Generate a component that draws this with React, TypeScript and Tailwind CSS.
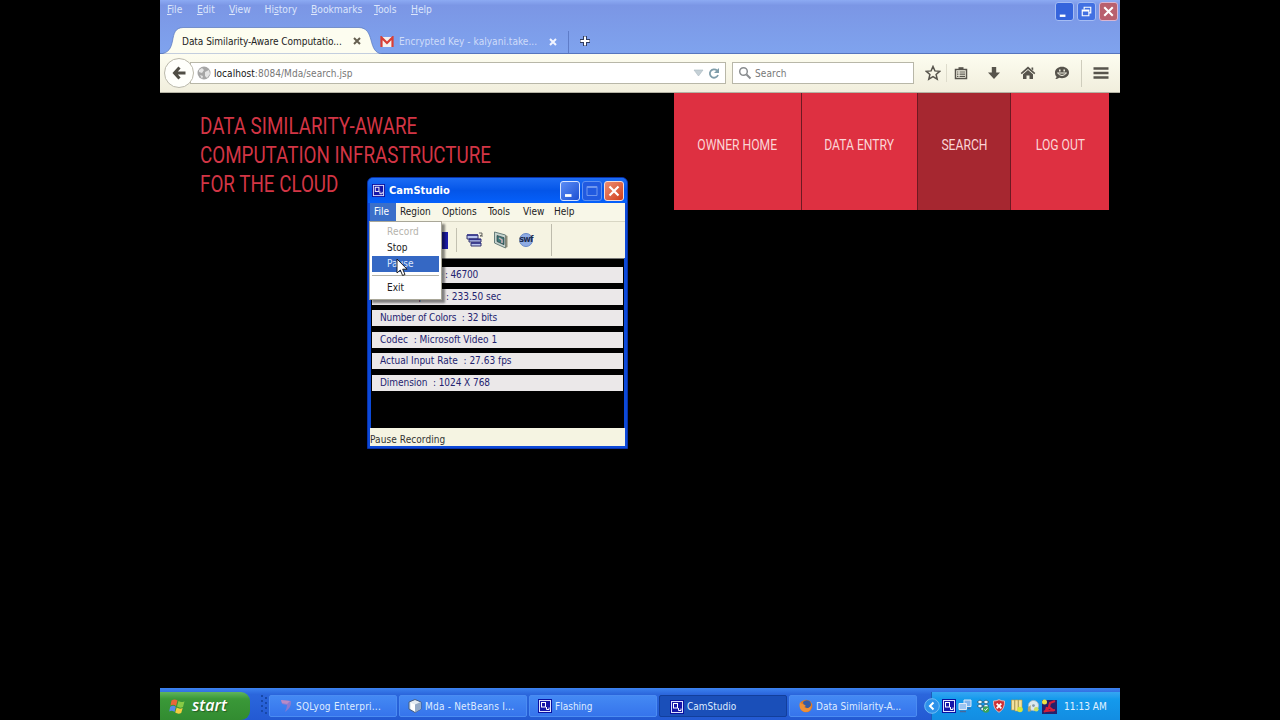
import type { ReactNode } from 'react'
import clsx from 'clsx'

const browserMenu = [
  { label: 'File', width: 'w-[30px]' },
  { label: 'Edit', width: 'w-8' },
  { label: 'View', width: 'w-[35.5px]' },
  { label: 'History', width: 'w-[46.5px]' },
  { label: 'Bookmarks', width: 'w-[63px]' },
  { label: 'Tools', width: 'w-[37px]' },
  { label: 'Help', width: 'w-8' },
]

const navItems = [
  { label: 'OWNER HOME', width: 'w-[127px]' },
  { label: 'DATA ENTRY', width: 'w-[115px]' },
  { label: 'SEARCH', width: 'w-[92px]', active: true },
  { label: 'LOG OUT', width: 'w-[98px]' },
]

const recorderMenu = [
  { label: 'File', width: 'w-[26px]', active: true },
  { label: 'Region', width: 'w-[42px]' },
  { label: 'Options', width: 'w-[46px]' },
  { label: 'Tools', width: 'w-[35px]' },
  { label: 'View', width: 'w-[31px]' },
  { label: 'Help', width: 'w-8' },
]

const stats = [
  { text: 'Current Frame : 46700', tracking: 'tracking-[-.18px]' },
  { text: 'Time Elapsed  : 233.50 sec', tracking: 'tracking-normal' },
  { text: 'Number of Colors  : 32 bits', tracking: 'tracking-[-.15px]' },
  { text: 'Codec  : Microsoft Video 1', tracking: 'tracking-normal' },
  { text: 'Actual Input Rate  : 27.63 fps', tracking: 'tracking-normal' },
  { text: 'Dimension  : 1024 X 768', tracking: 'tracking-[-.06px]' },
]

function CamIcon({ className }: { className?: string }) {
  return (
    <svg viewBox="0 0 14 14" className={clsx('shrink-0', className)}>
      <rect width="14" height="14" fill="#0a10a0" />
      <rect x="1.5" y="1.5" width="11" height="11" fill="#1616a8" stroke="#dfe4ff" />
      <rect x="3.5" y="3.5" width="4" height="4.5" fill="none" stroke="#fff" />
      <path d="M8.500 8v2.500h2.500V8.500" fill="none" stroke="#fff" />
    </svg>
  )
}

function GmailIcon() {
  return (
    <svg viewBox="0 0 14 12" className="w-[14px] h-3 shrink-0">
      <rect x="1" y="1" width="12" height="10" fill="#f5f1ef" />
      <path d="M1.500 11V1.500L7 7l5.500-5.500V11" fill="none" stroke="#d93e35" strokeWidth="2.200" />
    </svg>
  )
}

function CloseGlyph({ color }: { color: string }) {
  return (
    <svg viewBox="0 0 8 8" className="w-2 h-2 shrink-0">
      <path d="M1 1l6 6M7 1L1 7" stroke={color} strokeWidth="2" />
    </svg>
  )
}

function TitleButton({ className, children }: { className: string; children: ReactNode }) {
  return (
    <div className={clsx('shrink-0 rounded-[3px] border flex items-center justify-center', className)}>
      <svg viewBox="0 0 18 18" className="w-full h-full" fill="none" stroke="#fff">
        {children}
      </svg>
    </div>
  )
}

function BrowserHeader() {
  return (
    <div className="relative h-[54px] bg-linear-to-b from-[#8caaf3] from-0% via-[#7b96e5] via-10% to-[#7fa3ee] border-b border-[#5675bd]">
      <div className="flex h-[19px] justify-between">
        <div className="flex pl-[7px] text-[10.200px] leading-[19px] text-[#dbe5fb]">
          {browserMenu.map(({ label, width }) => (
            <span key={label} className={clsx('shrink-0', width)}>
              <span className="underline underline-offset-1">
                {label === 'History' ? '' : label[0]}
              </span>
              {label === 'History' ? <>Hi<u>s</u>tory</> : label.slice(1)}
            </span>
          ))}
        </div>
        <div className="flex gap-[3px] pt-[2px] pr-[2.500px]">
          <TitleButton className="w-[19px] h-[19px] bg-[#3564dc] border-[#a4bcf4]">
            <path d="M4 13.500h6" strokeWidth="2.500" />
          </TitleButton>
          <TitleButton className="w-[19px] h-[19px] bg-[#4270e2] border-[#a4bcf4]">
            <path d="M6.500 6.500v-2h7v6h-2M4.500 7.500h7v6h-7zM4.500 8.500h7" strokeWidth="1.200" />
          </TitleButton>
          <TitleButton className="w-[19px] h-[19px] bg-[#b9606e] border-[#d8b5d3]">
            <path d="M4.500 4.500l9 9M13.500 4.500l-9 9" strokeWidth="2.200" />
          </TitleButton>
        </div>
      </div>

      {/* Tabs */}
      <div className="relative flex items-center h-[27px] mt-[8px] text-[10px]">
        <svg viewBox="0 0 222 27" className="absolute left-0 top-0 w-[222px] h-[27px]">
          <path
            d="M0 27C9 26 11 21 12.500 14C14 6 15 1 23 .5H199C207 1 209 6 211 13C213 21 215 26 222 27Z"
            fill="#fdfdf0"
            stroke="#5675bd"
            strokeWidth=".7"
          />
        </svg>
        <div className="relative flex items-center pl-[22px] w-[220px] mt-px">
          <span className="w-[171px] whitespace-nowrap text-[#222] tracking-[-.04px]">Data Similarity-Aware Computatio...</span>
          <CloseGlyph color="#655f50" />
        </div>
        <div className="flex items-center w-[189px] border-r border-[#5e7cc8] h-[22px] mt-[2px]">
          <GmailIcon />
          <span className="ml-[5px] w-[150px] whitespace-nowrap text-[#cfdcf9] tracking-[.04px]">Encrypted Key - kalyani.take...</span>
          <CloseGlyph color="#f2f5ff" />
        </div>
        <svg viewBox="0 0 12 12" className="w-3 h-3 ml-2.5">
          <path d="M6 1v10M1 6h10" stroke="#303c60" strokeWidth="4" />
          <path d="M6 1.500v9M1.500 6h9" stroke="#fff" strokeWidth="2" />
        </svg>
      </div>
    </div>
  )
}

function BrowserToolbar() {
  return (
    <div className="relative flex items-center h-[39px] pl-[30px] bg-linear-to-b from-[#fdfdf0] to-[#f1eedd] border-b border-[#b5b3a4] text-[10px] text-[#777]">
      <div className="flex items-center w-[536px] h-[22px] bg-white border border-[#b8b7a8] pl-[6px] pr-[3px]">
        <svg viewBox="0 0 14 14" className="w-[14px] h-[14px]">
          <circle cx="7" cy="7" r="6.500" fill="#a6a6a6" />
          <path d="M2 4l3-2 2 2-2 3-3-1zM8 6l4-2 1 4-3 4-2-2zM3 9l3 1-1 3z" fill="#e4e4e4" />
        </svg>
        <span className="ml-[3px] tracking-[.05px]"><span className="text-[#151515]">localhost</span>:8084/Mda/search.jsp</span>
        <svg viewBox="0 0 30 14" className="ml-auto w-[30px] h-[14px]">
          <path d="M2 4h9l-4.500 6z" fill="#c5d0d6" stroke="#a9b8bf" strokeWidth=".6" />
          <path d="M25 4.500A4.200 4.200 0 1 0 26 9" fill="none" stroke="#7f9daa" strokeWidth="1.800" />
          <path d="M27 2v5h-5z" fill="#7f9daa" />
        </svg>
      </div>
      <div className="flex items-center w-[182px] h-[22px] ml-[6px] bg-white border border-[#b8b7a8] pl-[5px]">
        <svg viewBox="0 0 14 14" className="w-[14px] h-[14px]" fill="none" stroke="#8a8d90">
          <circle cx="5.500" cy="5.500" r="3.800" strokeWidth="1.500" />
          <path d="M8.500 8.500l4 4" strokeWidth="2" />
        </svg>
        <span className="ml-[3px] tracking-[.1px]">Search</span>
      </div>

      <div className="flex items-center ml-[11px] text-[#57544c]">
        <svg viewBox="0 0 16 16" className="w-4 h-4 -mr-[1px]">
          <path d="M8 1.500l1.900 4.400 4.800.4-3.600 3.200 1.100 4.700L8 11.700l-4.200 2.500 1.100-4.700L1.300 6.300l4.800-.4z" fill="none" stroke="currentColor" strokeWidth="1.500" />
        </svg>
        <div className="w-px h-[18px] ml-[6px] bg-[#dedccc]" />
        <svg viewBox="0 0 14 14" className="w-[14px] h-[14px] ml-[7px]">
          <path d="M1.500 3.500h11v9h-11z" fill="none" stroke="currentColor" strokeWidth="1.500" />
          <path d="M4.500 3V1.200h5V3z" fill="currentColor" />
          <path d="M3 6h1.500M5.500 6H11M3 8.200h1.500M5.500 8.200H11M3 10.400h1.500M5.500 10.400H11" stroke="currentColor" strokeWidth="1.200" />
        </svg>
        <svg viewBox="0 0 14 14" className="w-[14px] h-[14px] ml-[19px]" fill="currentColor">
          <path d="M4.800 1h4.400v5.500H13L7 13 1 6.500h3.800z" />
        </svg>
        <svg viewBox="0 0 16 14" className="w-4 h-[14px] ml-[19px]" fill="currentColor">
          <path d="M8 .5l7.300 6.600-1 1.100L8 2.900 1.700 8.200l-1-1.100zM11.500 1.500h1.700v3l-1.700-1.500zM8 4l5 4.300V13H9.500V9.500h-3V13H3V8.300z" />
        </svg>
        <svg viewBox="0 0 16 14" className="w-4 h-[14px] ml-[18px]">
          <path d="M8 .8c4 0 7 2.500 7 5.700s-3 5.700-7 5.700c-1 0-2-.1-2.800-.4-1 .8-2.500 1.300-4 1.300.8-.7 1.300-1.600 1.300-2.600C1.300 9.500 1 8 1 6.500 1 3.300 4 .8 8 .8z" fill="currentColor" />
          <path d="M5.800 3.500v2M10.200 3.500v2" stroke="#f5f3e4" strokeWidth="1.500" />
          <path d="M3.500 7q4.500 5 9 0z" fill="none" stroke="#f5f3e4" strokeWidth="1" />
        </svg>
        <div className="w-px h-[27px] ml-[11px] bg-[#cfcdbd]" />
        <svg viewBox="0 0 16 14" className="w-4 h-[14px] ml-[11px]">
          <path d="M.5 2.500h15M.5 7h15M.5 11.500h15" stroke="currentColor" strokeWidth="2.300" />
        </svg>
      </div>

      {/* Back button overlaps the start of the address field */}
      <div className="absolute left-1 top-[4px] w-[30px] h-[30px] rounded-full bg-[#fffffb] border border-[#bbb9ab] flex items-center justify-center">
        <svg viewBox="0 0 14 14" className="w-[14px] h-[14px]" fill="none" stroke="#504d45" strokeWidth="3">
          <path d="M7.500 1.500L2.500 7l5 5.500M3 7h10.500" />
        </svg>
      </div>
    </div>
  )
}

function RecorderWindow() {
  return (
    <div className="absolute left-[207px] top-[177px] w-[261px] h-[272px] flex flex-col rounded-t-[6px] bg-[#0c49d8] border border-[#0831a8] px-[2px] pb-[2px] text-[10px]">
      <div className="flex items-center h-[25px] shrink-0 -mx-[2px] rounded-t-[5px] pl-[4px] pr-[3px] bg-linear-to-b from-[#1c6cf4] via-[#0455e8] to-[#0560fb]">
        <CamIcon className="w-[13px] h-[13px]" />
        <span className="ml-1 mt-[2px] font-bold text-[11px] text-white tracking-[.05px]">CamStudio</span>
        <div className="flex gap-[2px] ml-auto">
          <TitleButton className="w-5 h-5 bg-linear-to-br from-[#5b8cf5] to-[#1c4fd2] border-[#d8e4ff]">
            <path d="M4 13.500h6.500" strokeWidth="2.800" />
          </TitleButton>
          <TitleButton className="w-5 h-5 bg-[#215ae0] border-[#5f91f1]">
            <path d="M4 4.500h10v9H4zM4 5.500h10" stroke="#6e96ee" />
          </TitleButton>
          <TitleButton className="w-5 h-5 bg-linear-to-br from-[#ed8c70] to-[#d03c16] border-[#f6dcd6]">
            <path d="M4.500 4.500l9 9M13.500 4.500l-9 9" strokeWidth="2.200" />
          </TitleButton>
        </div>
      </div>

      <div className="flex h-[19px] shrink-0 bg-[#f8f7e8] border-b border-[#d8d6c4] leading-[18px] text-[#222]">
        {recorderMenu.map(({ label, width, active }) => (
          <div key={label} className={clsx('shrink-0 pl-1', width, active && 'bg-[#3b6fc9] text-white')}>{label}</div>
        ))}
      </div>

      <div className="flex items-center h-[36px] shrink-0 bg-[#f5f3e2] pl-[69px]">
        <div className="w-[9px] h-[17px] bg-[#1c1ca6]" />
        <div className="w-px h-6 ml-2 bg-[#c3c1b1]" />
        <svg viewBox="0 0 17 16" className="w-[17px] h-4 ml-[9px]">
          <path d="M1 3h11v4H1zM3 7h12v3H3zM5 11h10v3H5z" fill="#b9c4ee" stroke="#34346e" />
          <path d="M1 3h11M3 7.500h12M5 11h10" stroke="#31318a" strokeWidth="1.500" />
          <path d="M13 1h3v2l-2 1h3" fill="none" stroke="#444" strokeWidth=".8" />
        </svg>
        <svg viewBox="0 0 16 18" className="w-4 h-[18px] ml-[10px]">
          <path d="M1.500 1l11 3v13l-11-5z" fill="#c5d4cf" stroke="#687e7c" />
          <path d="M12.500 4l2 1v11l-2 1z" fill="#8b8b78" />
          <path d="M4 4.500l7 2.200v7L4 10.500z" fill="#3d7a7a" stroke="#303d44" strokeWidth=".7" />
          <path d="M6 7l3 2v3" stroke="#d0b2b8" strokeWidth="1.500" fill="none" />
        </svg>
        <div className="flex items-center justify-center w-[14px] h-[14px] ml-[10px] rounded-full bg-[#8eabe4] border border-[#6688c9] text-[9px] font-bold text-[#1c2c50] tracking-[-.8px]">swf</div>
        <div className="w-px h-8 ml-[18px] bg-[#bdbbac]" />
      </div>

      <div className="flex flex-col h-[170px] shrink-0 ml-px mr-px pt-[8px] gap-[5.500px] bg-black border-t border-[#777]">
        {stats.map(({ text, tracking }) => (
          <div
            key={text}
            className={clsx('h-4 shrink-0 ml-px mr-px pl-2 leading-[15px] whitespace-pre bg-[#ebe8e9] text-[#23236f]', tracking)}
          >
            {text}
          </div>
        ))}
      </div>
      <div className="h-[18px] shrink-0 bg-[#f5f4e2] leading-[23px] text-[#333] tracking-[.08px]">Pause Recording</div>

      {/* File menu */}
      <div className="absolute left-[1px] top-[43px] w-[73px] h-[79px] py-[2px] px-[2px] bg-white border border-[#a9a798] shadow-[3px_3px_2px_rgba(0,0,0,.45)] leading-4 text-[#222]">
        <div className="h-4 pl-[15px] text-[#b5b3ac] tracking-[.15px]">Record</div>
        <div className="h-4 pl-[15px]">Stop</div>
        <div className="h-4 pl-[15px] bg-[#3568c4] text-[#dce7fb]">Pause</div>
        <div className="h-px mt-[3px] mb-[4px] bg-[#b3b1a5]" />
        <div className="h-4 pl-[15px]">Exit</div>
      </div>

      {/* Pointer */}
      <svg viewBox="0 0 12 19" className="absolute left-[28px] top-[80px] w-3 h-[19px]">
        <path d="M1 1v14l3.300-3 2.300 5.500 2.400-1-2.300-5.300H11z" fill="#fff" stroke="#111" strokeWidth=".9" />
      </svg>
    </div>
  )
}

function TaskButton({ icon, label, active, className }: { icon: ReactNode; label: string; active?: boolean; className?: string }) {
  return (
    <div
      className={clsx(
        'flex items-center shrink-0 w-[128px] h-[22px] rounded-[2px] border whitespace-nowrap text-[#dfecff]',
        active ? 'bg-[#1a4fb9] border-[#123f9c]' : 'bg-linear-to-b from-[#4489f3] to-[#3674ec] border-[#4b8cf2]',
        className,
      )}
    >
      {icon}
      <span className="ml-[3px]">{label}</span>
    </div>
  )
}

function Taskbar() {
  return (
    <div className="flex h-8 shrink-0 bg-linear-to-b from-[#3d83ef] via-[#2b66dc] via-20% to-[#235ad3] text-[10px]">
      <div className="flex items-center w-[90px] h-[28px] mt-1 rounded-r-[9px] bg-linear-to-b from-[#5fb45c] via-[#3a9838] via-25% to-[#328c31] pl-[9px]">
        <svg viewBox="0 0 17 16" className="w-[17px] h-4">
          <path d="M2.500 2.500q3-2 6 0L7 8Q4.500 6 1.500 7.500z" fill="#ea6638" />
          <path d="M9.500 3q3 2 6 .2L14 9q-3 1.500-6-.5z" fill="#87ca45" />
          <path d="M1.200 8.700q3-2 5.600 0L5.500 14q-2.500-2-5.300-.5z" fill="#5889e8" />
          <path d="M7.700 9.500q3 2 6 .5l-1.500 5q-3 1.500-6-.5z" fill="#f4cd40" />
        </svg>
        <span className="ml-[6px] mb-[2px] font-['Open_Sans','Noto_Sans',sans-serif] font-semibold italic text-[16px] text-white [text-shadow:1px_1px_1px_#275f25]">start</span>
      </div>
      <div className="flex gap-[2px] pt-[7px] ml-[9px] pl-[2px] w-[10px]">
        <div className="w-[2px] h-[18px] bg-[repeating-linear-gradient(#1748a8_0_2px,transparent_2px_5px)]" />
        <div className="w-[2px] h-[18px] mt-[2px] bg-[repeating-linear-gradient(#1748a8_0_2px,transparent_2px_5px)]" />
      </div>
      <div className="flex gap-[2px] pt-[7px]">
        <TaskButton
          label="SQLyog Enterpri..."
          className="pl-[10px] tracking-[.23px]"
          icon={
            <svg viewBox="0 0 13 14" className="w-[13px] h-[14px]">
              <path d="M1 1l10 1q1 6-6 11 2-4 2-7l-5-1z" fill="#8a7ad0" />
              <path d="M1 1l9 1-3 3-5-1z" fill="#b98bc5" />
            </svg>
          }
        />
        <TaskButton
          label="Mda - NetBeans I..."
          className="pl-[8px] tracking-[.2px]"
          icon={
            <svg viewBox="0 0 14 14" className="w-[14px] h-[14px]">
              <path d="M7 .5L13 3v7l-6 3.500L1 10V3z" fill="#e3ebf2" stroke="#435c80" />
              <path d="M7 5.500L13 3v7l-6 3.500z" fill="#94aac7" />
              <path d="M3 4l4 1.500v7L3 10z" fill="#fff" />
            </svg>
          }
        />
        <TaskButton label="Flashing" className="pl-[8px]" icon={<CamIcon className="w-[14px] h-[14px]" />} />
        <TaskButton label="CamStudio" active className="pt-px pl-[10px]" icon={<CamIcon className="w-[14px] h-[14px]" />} />
        <TaskButton
          label="Data Similarity-A..."
          className="pl-[9px] tracking-[.05px]"
          icon={
            <svg viewBox="0 0 14 14" className="w-[14px] h-[14px]">
              <circle cx="7" cy="7" r="6.300" fill="#e27a20" />
              <path d="M4 3q3-3 7-.5 2 3 0 6Q8 10 6 8 4 6 4 3z" fill="#355ba5" />
              <path d="M1 3q1 2 4 2.500L7 7 5 8q3 3 7-1 0 6-6 6Q-1 11 1 3z" fill="#ee9038" />
            </svg>
          }
        />
      </div>

      {/* Notification area */}
      <div className="relative flex items-center w-[189px] h-[28px] mt-1 ml-auto pl-[10px] gap-[2px] bg-linear-to-b from-[#35a6f2] via-[#149aec] via-25% to-[#138de2] border-l border-[#1d5eb8]">
        <svg viewBox="0 0 16 16" className="absolute -left-2 top-[6px] w-4 h-4">
          <circle cx="8" cy="8" r="7.300" fill="#2d91ea" stroke="#72bdf5" />
          <path d="M9.500 4.500L6 8l3.500 3.500" fill="none" stroke="#fff" strokeWidth="2" />
        </svg>
        <CamIcon className="w-[14px] h-[14px]" />
        <svg viewBox="0 0 14 14" className="w-[14px] h-[14px]">
          <path d="M6 1h7v6.500H6z" fill="#7fb4ee" stroke="#dce9f7" />
          <path d="M1 4.500h7.500v6H1z" fill="#9bc4f1" stroke="#dce9f7" />
          <path d="M2 12.500h6M9.500 9.500h3" stroke="#48689b" strokeWidth="1.500" />
        </svg>
        <svg viewBox="0 0 14 14" className="w-[14px] h-[14px] ml-[2px]">
          <path d="M4 1l3 2-3 2-3-2zM10 1l3 2-3 2-3-2zM4 5l3 2-3 2-3-2zM10 5l3 2-3 2-3-2zM4 10l3-2 3 2-3 2z" fill="#eef7ff" stroke="#1c5168" strokeWidth=".7" />
          <circle cx="10" cy="10.500" r="3.200" fill="#3ca35a" />
          <path d="M8.500 10.500l1 1 2-2.300" stroke="#fff" fill="none" />
        </svg>
        <svg viewBox="0 0 14 14" className="w-[14px] h-[14px]">
          <path d="M7 .7q3 1.500 5.500 1.300Q13 10 7 13.300 1 10 1.500 2 4 2.200 7 .7z" fill="#cd3035" stroke="#dfb7b9" />
          <path d="M4.700 4.700l4.600 4.600M9.300 4.700L4.700 9.300" stroke="#fff" strokeWidth="1.800" />
        </svg>
        <svg viewBox="0 0 14 14" className="w-[14px] h-[14px] ml-[2px]">
          <path d="M1.500 1h3v10h-3zM5 1h3v11H5zM8.500 1h3.500v10H8.500z" fill="#f3e2a0" stroke="#c49a3a" strokeWidth=".6" />
          <circle cx="10" cy="10.500" r="2.800" fill="#d6e639" />
        </svg>
        <svg viewBox="0 0 15 14" className="w-[14px] h-[14px]">
          <circle cx="8" cy="6.500" r="5.500" fill="#dce8ee" stroke="#9ab4c5" />
          <circle cx="8" cy="6.500" r="1.500" fill="#8397a6" />
          <path d="M2 9l3-3v7H2z" fill="#bba665" />
          <circle cx="11" cy="10.500" r="2.500" fill="#cadf61" />
        </svg>
        <svg viewBox="0 0 15 15" className="w-[15px] h-[15px]">
          <path d="M0 1h15v14H0z" fill="#26206b" />
          <path d="M13 2L8 4l-1 4 5 4M8 8l-6 5M5 8l-1 4 9-1" fill="none" stroke="#d5203b" strokeWidth="2.200" />
          <circle cx="2.500" cy="3" r="2.500" fill="#ede444" />
        </svg>
        <span className="ml-[5px] text-[#e1f2ff] whitespace-nowrap">11:13 AM</span>
      </div>
    </div>
  )
}

export default function App() {
  return (
    <div className="w-[1280px] h-[720px] overflow-hidden bg-black px-[160px] font-['DejaVu_Sans_Condensed','DejaVu_Sans',sans-serif]">
      <div className="relative flex flex-col h-full">
        <BrowserHeader />
        <BrowserToolbar />

        {/* Page */}
        <div className="flex grow items-start justify-between pl-10 pr-[11px] font-['Roboto',sans-serif]">
          <h1 className="w-[370px] mt-[19px] origin-left scale-x-[.817] whitespace-nowrap text-[23px] leading-[29px] text-[#d23545]">
            DATA SIMILARITY-AWARE<br />
            COMPUTATION INFRASTRUCTURE<br />
            FOR THE CLOUD
          </h1>
          <nav className="flex gap-px h-[117px] bg-[#6d1922]">
            {navItems.map(({ label, width, active }) => (
              <a
                key={label}
                className={clsx(
                  'flex items-center justify-center pb-[13px] text-[15px] text-[#fbd5d6]',
                  width,
                  active ? 'bg-[#a62730]' : 'bg-[#de3041]',
                )}
              >
                <span className="scale-x-[.81] whitespace-nowrap">{label}</span>
              </a>
            ))}
          </nav>
        </div>

        <Taskbar />
        <RecorderWindow />
      </div>
    </div>
  )
}
